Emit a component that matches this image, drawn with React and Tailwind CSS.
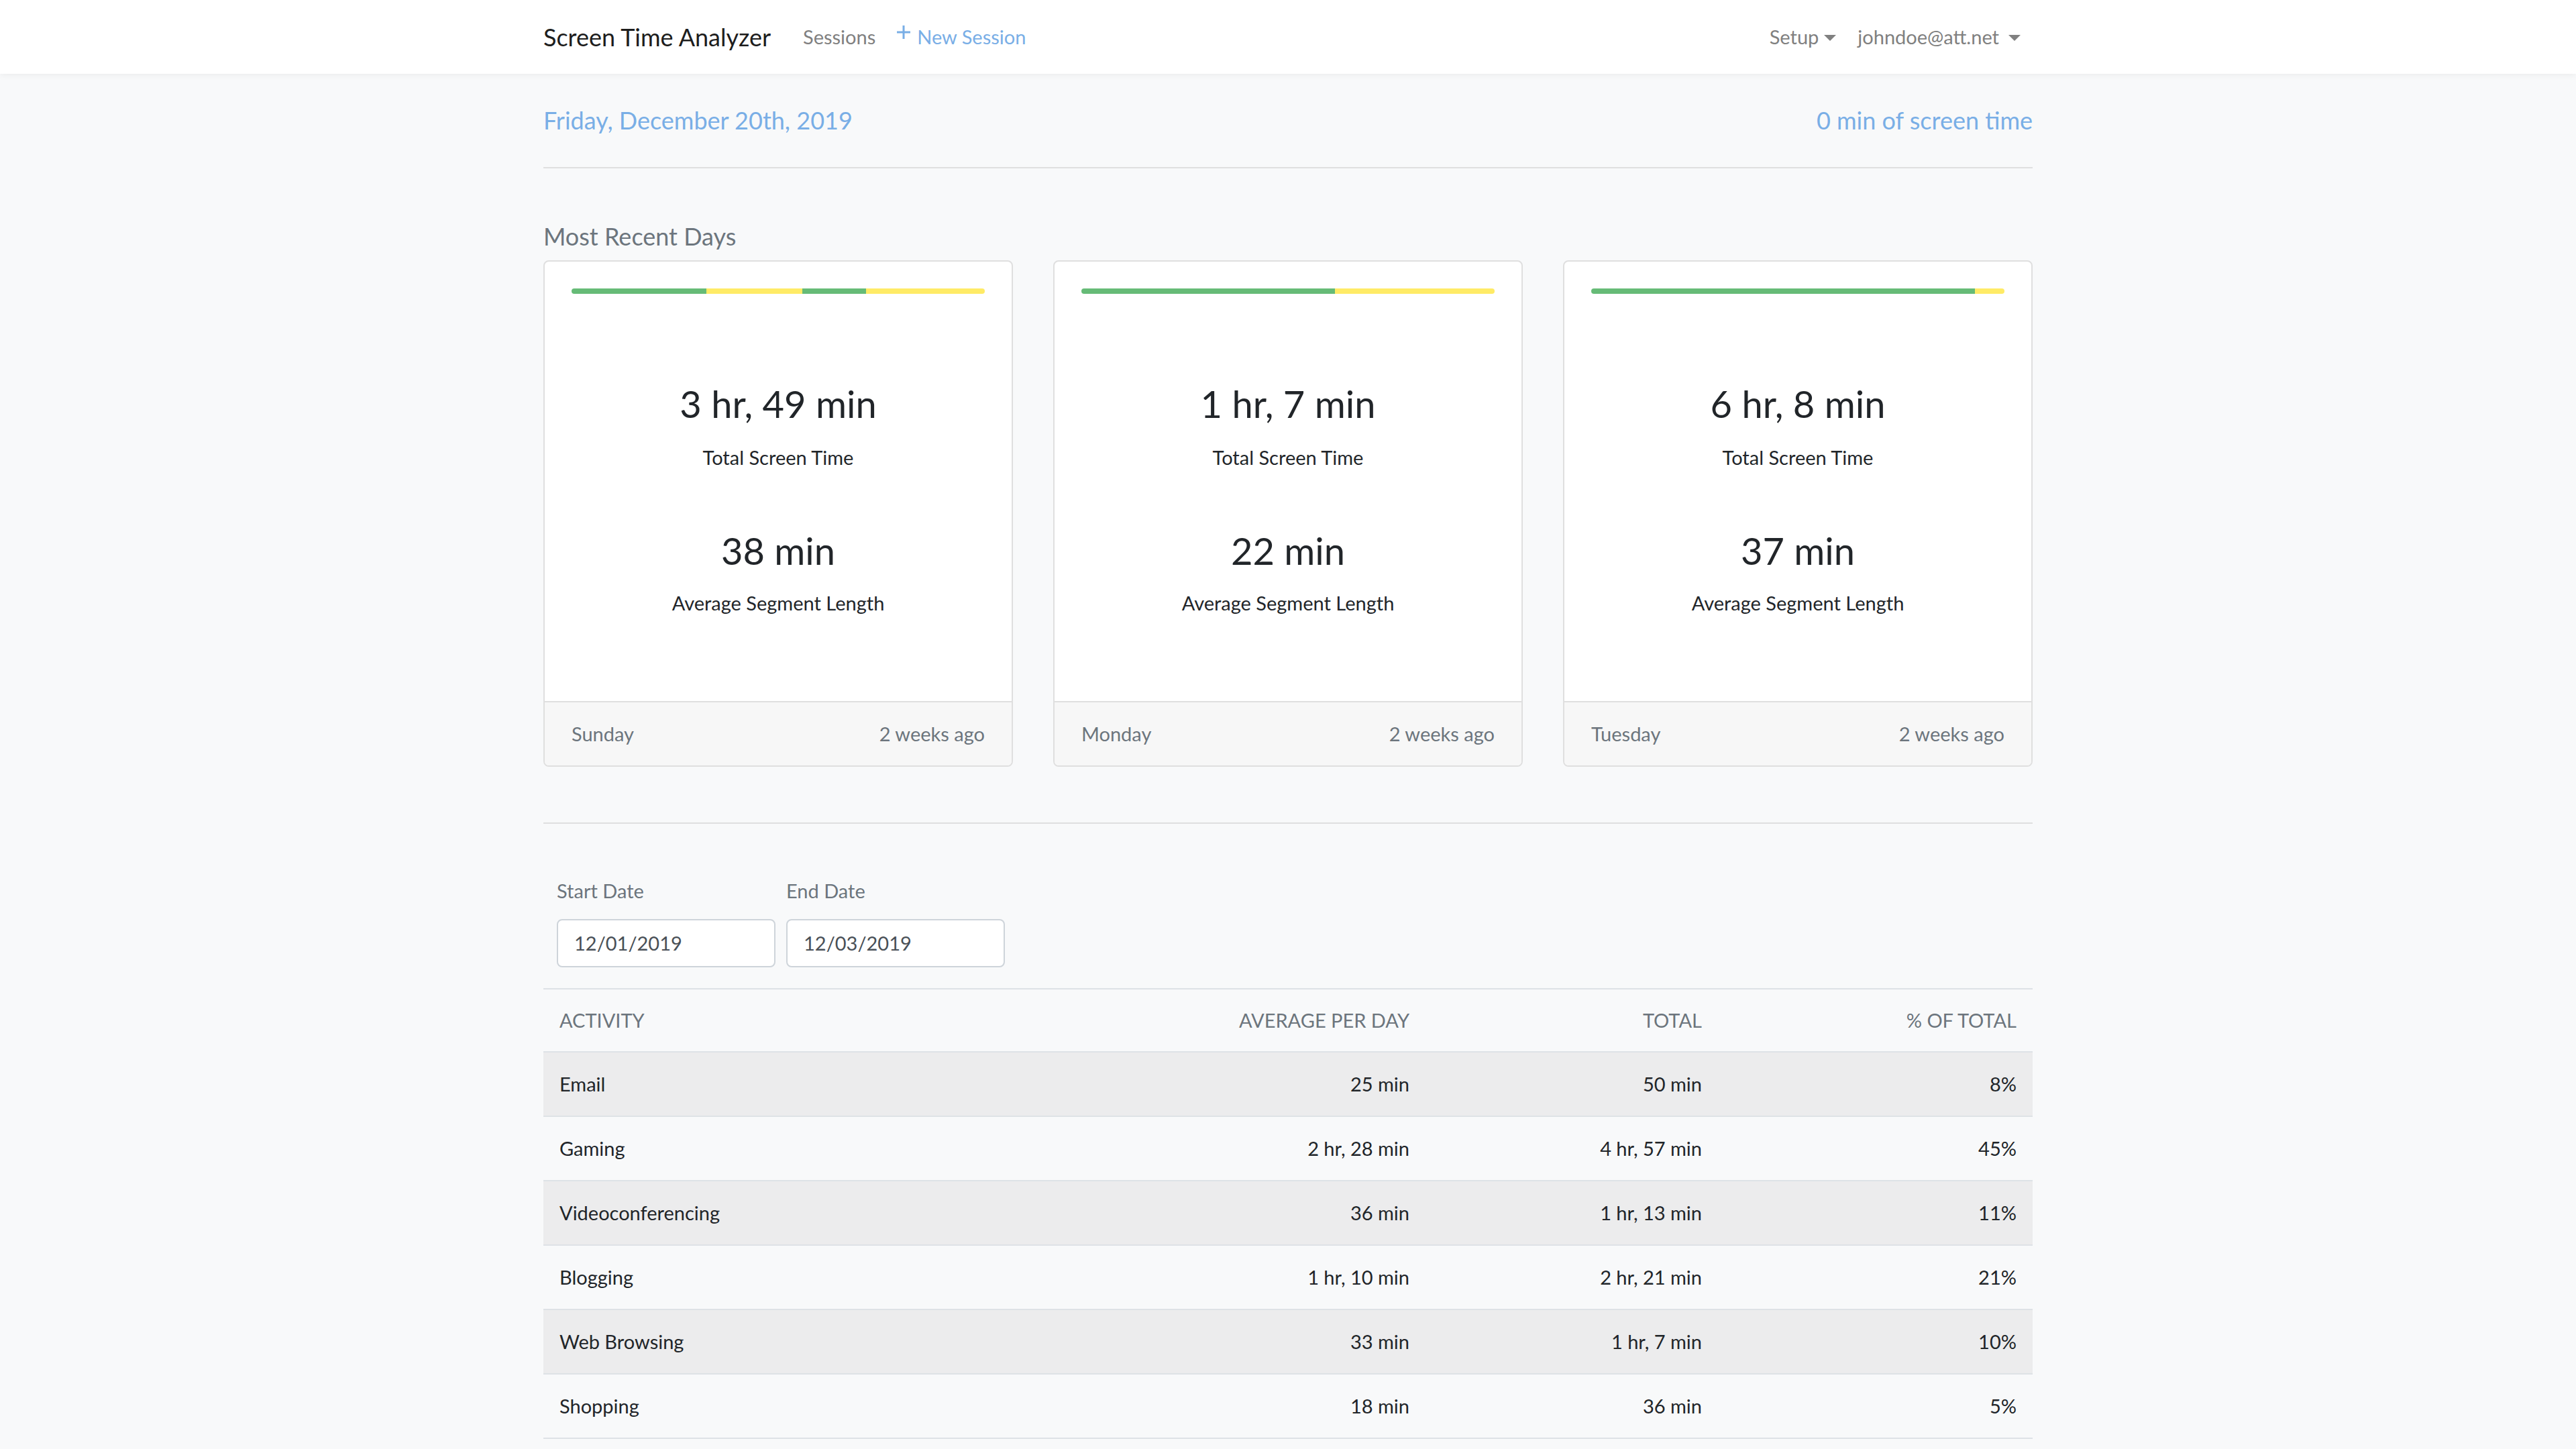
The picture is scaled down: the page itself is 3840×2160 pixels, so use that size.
import React from 'react'

const days = [
  {
    total: '3 hr, 49 min',
    avg: '38 min',
    day: 'Sunday',
    ago: '2 weeks ago',
    segments: [
      ['g', 32.7],
      ['y', 23.1],
      ['g', 15.5],
      ['y', 28.7],
    ],
  },
  {
    total: '1 hr, 7 min',
    avg: '22 min',
    day: 'Monday',
    ago: '2 weeks ago',
    segments: [
      ['g', 61.4],
      ['y', 38.6],
    ],
  },
  {
    total: '6 hr, 8 min',
    avg: '37 min',
    day: 'Tuesday',
    ago: '2 weeks ago',
    segments: [
      ['g', 92.8],
      ['y', 7.2],
    ],
  },
]

const activities = [
  ['Email', '25 min', '50 min', '8%'],
  ['Gaming', '2 hr, 28 min', '4 hr, 57 min', '45%'],
  ['Videoconferencing', '36 min', '1 hr, 13 min', '11%'],
  ['Blogging', '1 hr, 10 min', '2 hr, 21 min', '21%'],
  ['Web Browsing', '33 min', '1 hr, 7 min', '10%'],
  ['Shopping', '18 min', '36 min', '5%'],
]

function Caret({ gap = 'ml-[8px]' }) {
  return (
    <span className={`${gap} inline-block h-0 w-0 border-x-[9px] border-t-[9px] border-x-transparent border-t-current align-[5px]`} />
  )
}

function Navbar() {
  return (
    <nav className="bg-white shadow-[0_2px_10px_rgba(0,0,0,0.06)]">
      <div className="mx-auto flex h-[110px] w-[2280px] items-center px-[30px]">
        <span className="mr-[32px] text-[36px] text-[#1d1d1d]">Screen Time Analyzer</span>
        <a className="px-[16px] text-[29px] text-[#808080]">Sessions</a>
        <a className="flex items-center px-[16px] text-[29px] text-[#79aee6]">
          <svg width="20" height="20" viewBox="0 0 20 20" className="mr-[10px] -mt-[14px]">
            <path d="M10 0v20M0 10h20" stroke="currentColor" strokeWidth="3" />
          </svg>
          New Session
        </a>
        <div className="ml-auto flex items-center text-[29px] text-[#808080]">
          <a className="px-[16px]">
            Setup
            <Caret />
          </a>
          <a className="pl-[16px] pr-[18px]">
            johndoe@att.net
            <Caret gap="ml-[14px]" />
          </a>
        </div>
      </div>
    </nav>
  )
}

function DayCard({ d }) {
  return (
    <div className="flex flex-col overflow-hidden rounded-[8px] border-2 border-[#dfdfdf] bg-white">
      <div className="h-[655px] px-[40px] pt-[40px]">
        <div className="flex h-[8px] overflow-hidden rounded-full">
          {d.segments.map(([c, w], i) => (
            <div
              key={i}
              className={c === 'g' ? 'bg-[#66bb77]' : 'bg-[#ffeb66]'}
              style={{ width: `${w}%` }}
            />
          ))}
        </div>
        <div className="mt-[130px] text-center text-[#212529]">
          <div className="text-[56px] leading-[67px]">{d.total}</div>
          <div className="mt-[24px] text-[29px] leading-[46px]">Total Screen Time</div>
          <div className="mt-[82px] text-[56px] leading-[67px]">{d.avg}</div>
          <div className="mt-[22px] text-[29px] leading-[46px]">Average Segment Length</div>
        </div>
      </div>
      <div className="flex justify-between border-t-2 border-[#dfdfdf] bg-[#f7f7f7] px-[40px] py-[24px] text-[29px] leading-[46px] text-[#6c757d]">
        <span>{d.day}</span>
        <span>{d.ago}</span>
      </div>
    </div>
  )
}

export default function App() {
  return (
    <div className="min-h-screen bg-[#f8f9fa] font-['Lato','Liberation_Sans',sans-serif]">
      <Navbar />
      <main className="mx-auto w-[2280px] px-[30px]">
        <div className="flex justify-between pt-[45px] text-[36px] leading-[48px] text-[#79aee6]">
          <span>Friday, December 20th, 2019</span>
          <span>0 min of screen time</span>
        </div>
        <hr className="mt-[46px] border-t-2 border-[#dfdfdf]" />
        <h5 className="mt-[77px] text-[36px] leading-[48px] text-[#6c757d]">Most Recent Days</h5>
        <div className="mt-[12px] grid grid-cols-3 gap-[60px]">
          {days.map((d) => (
            <DayCard key={d.day} d={d} />
          ))}
        </div>
        <hr className="mt-[83px] border-t-2 border-[#dfdfdf]" />
        <div className="flex gap-[16px] px-[20px] pt-[78px] pb-[31px]">
          {[
            ['Start Date', '12/01/2019'],
            ['End Date', '12/03/2019'],
          ].map(([label, value]) => (
            <div key={label} className="flex flex-col">
              <label className="mb-[20px] text-[29px] leading-[44px] text-[#6c757d]">{label}</label>
              <div className="flex h-[72px] w-[326px] items-center rounded-[8px] border-2 border-[#ced4da] bg-white px-[24px] text-[29px] text-[#495057]">
                {value}
              </div>
            </div>
          ))}
        </div>
        <table className="w-full border-collapse text-[29px] leading-[46px]">
          <thead>
            <tr className="border-y-2 border-[#dee2e6] text-[#6c757d] uppercase">
              <th className="px-[24px] py-[23px] text-left font-normal">Activity</th>
              <th className="w-[560px] px-[24px] py-[23px] text-right font-normal">Average per day</th>
              <th className="w-[436px] px-[24px] py-[23px] text-right font-normal">Total</th>
              <th className="w-[469px] px-[24px] py-[23px] text-right font-normal">% of total</th>
            </tr>
          </thead>
          <tbody className="text-[#212529]">
            {activities.map(([name, avg, total, pct], i) => (
              <tr key={name} className={`border-b-2 border-[#dee2e6] ${i % 2 === 0 ? 'bg-[#ececed]' : ''}`}>
                <td className="px-[24px] py-[24px]">{name}</td>
                <td className="px-[24px] py-[24px] text-right">{avg}</td>
                <td className="px-[24px] py-[24px] text-right">{total}</td>
                <td className="px-[24px] py-[24px] text-right">{pct}</td>
              </tr>
            ))}
          </tbody>
        </table>
      </main>
    </div>
  )
}
